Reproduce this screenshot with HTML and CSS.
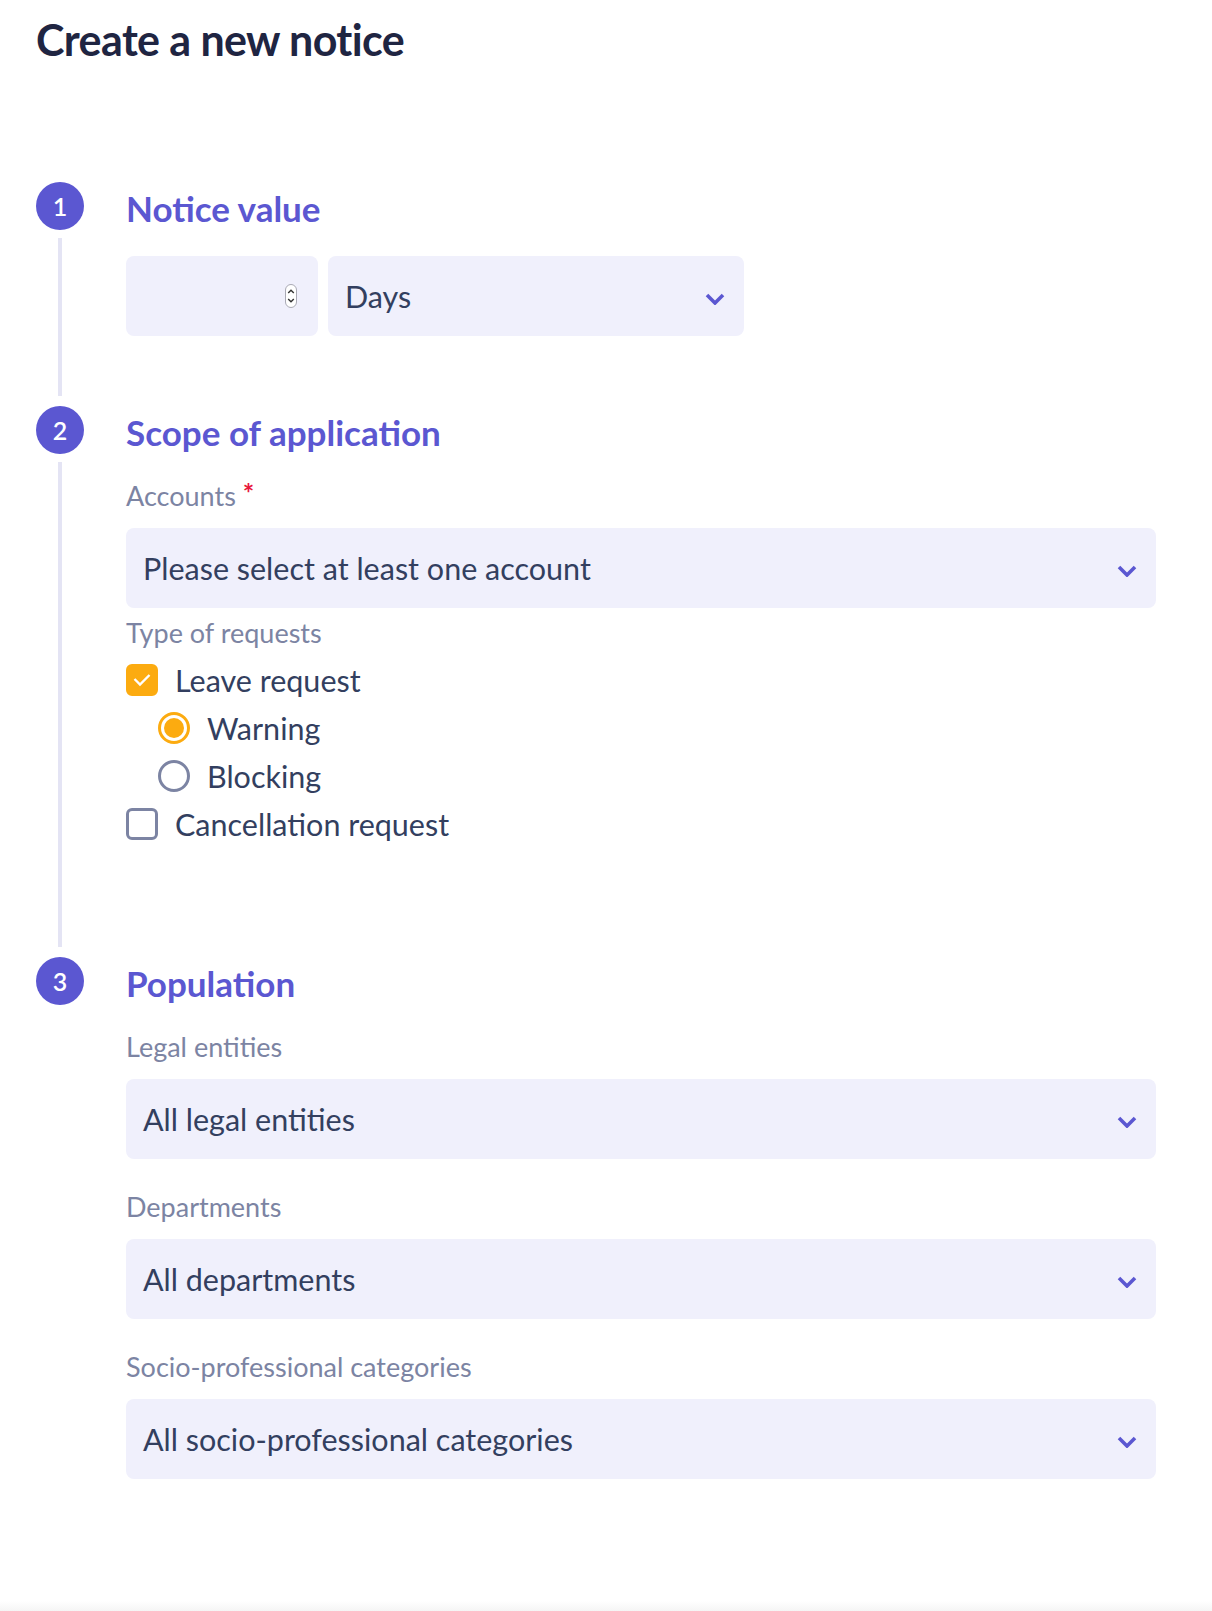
FILE: index.html
```html
<!DOCTYPE html>
<html lang="en">
<head>
<meta charset="utf-8">
<title>Create a new notice</title>
<link rel="stylesheet" href="styles.css">
</head>
<body>
<div class="page">
  <main class="content">
    <h1 class="title">Create a new notice</h1>
    <ol class="steps">
      <li class="step step-1">
        <div class="rail"><span class="num">1</span><span class="line"></span></div>
        <div class="step-body">
          <h2 class="step-title">Notice value</h2>
          <div class="value-row">
            <div class="field field-number">
              <span class="spinner">
                <svg width="12" height="24" viewBox="0 0 12 24"><path d="M3.2 9 L6 6.2 L8.8 9" fill="none" stroke="#333" stroke-width="1.4"/><path d="M3.2 15 L6 17.8 L8.8 15" fill="none" stroke="#333" stroke-width="1.4"/></svg>
              </span>
            </div>
            <div class="field field-select field-days">
              <span class="field-text">Days</span>
              <svg class="chev" width="20" height="12" viewBox="0 0 20 12"><path d="M2 2 L10 10 L18 2" fill="none" stroke="#5b57d1" stroke-width="3.6"/></svg>
            </div>
          </div>
        </div>
      </li>
      <li class="step step-2">
        <div class="rail"><span class="num">2</span><span class="line"></span></div>
        <div class="step-body">
          <h2 class="step-title">Scope of application</h2>
          <div class="group first">
            <label class="label">Accounts <span class="req">*</span></label>
            <div class="field field-select">
              <span class="field-text">Please select at least one account</span>
              <svg class="chev" width="20" height="12" viewBox="0 0 20 12"><path d="M2 2 L10 10 L18 2" fill="none" stroke="#5b57d1" stroke-width="3.6"/></svg>
            </div>
          </div>
          <div class="group tight">
            <label class="label">Type of requests</label>
            <div class="options">
              <div class="option">
                <span class="checkbox checked"><svg width="24" height="18" viewBox="0 0 24 18"><path d="M4.5 8 L10 13.5 L19.5 4" fill="none" stroke="#fff" stroke-width="2.4"/></svg></span>
                <span class="opt-text">Leave request</span>
              </div>
              <div class="option sub">
                <span class="radio checked"><span class="dot"></span></span>
                <span class="opt-text">Warning</span>
              </div>
              <div class="option sub">
                <span class="radio"></span>
                <span class="opt-text">Blocking</span>
              </div>
              <div class="option">
                <span class="checkbox"></span>
                <span class="opt-text">Cancellation request</span>
              </div>
            </div>
          </div>
        </div>
      </li>
      <li class="step step-3">
        <div class="rail"><span class="num">3</span></div>
        <div class="step-body">
          <h2 class="step-title">Population</h2>
          <div class="group first">
            <label class="label">Legal entities</label>
            <div class="field field-select">
              <span class="field-text">All legal entities</span>
              <svg class="chev" width="20" height="12" viewBox="0 0 20 12"><path d="M2 2 L10 10 L18 2" fill="none" stroke="#5b57d1" stroke-width="3.6"/></svg>
            </div>
          </div>
          <div class="group">
            <label class="label">Departments</label>
            <div class="field field-select">
              <span class="field-text">All departments</span>
              <svg class="chev" width="20" height="12" viewBox="0 0 20 12"><path d="M2 2 L10 10 L18 2" fill="none" stroke="#5b57d1" stroke-width="3.6"/></svg>
            </div>
          </div>
          <div class="group">
            <label class="label">Socio-professional categories</label>
            <div class="field field-select">
              <span class="field-text">All socio-professional categories</span>
              <svg class="chev" width="20" height="12" viewBox="0 0 20 12"><path d="M2 2 L10 10 L18 2" fill="none" stroke="#5b57d1" stroke-width="3.6"/></svg>
            </div>
          </div>
        </div>
      </li>
    </ol>
  </main>
  <div class="footer-edge"></div>
</div>
</body>
</html>
```

FILE: styles.css
```css
* { box-sizing: border-box; }
html, body { margin: 0; padding: 0; background: #fff; }
body {
  font-family: "Lato", "Noto Sans", sans-serif;
  color: #333f5f;
}
.page {
  min-height: 100vh;
  display: flex;
  flex-direction: column;
}
.content {
  padding: 10px 0 0 36px;
}
.title {
  margin: 0;
  font-size: 43px;
  line-height: 60px;
  font-weight: 700;
  color: #1f2542;
  letter-spacing: -0.6px;
}
.steps {
  list-style: none;
  margin: 112px 0 0 0;
  padding: 0;
}
.step {
  display: flex;
  gap: 42px;
}
.rail {
  width: 48px;
  display: flex;
  flex-direction: column;
  align-items: center;
  flex: none;
}
.num {
  width: 48px;
  height: 48px;
  border-radius: 50%;
  background: #5b57d1;
  color: #fff;
  font-size: 25px;
  font-weight: 600;
  display: flex;
  align-items: center;
  justify-content: center;
  flex: none;
}
.line {
  flex: 1;
  width: 4px;
  margin: 8px 0 10px;
  background: #e4e4f4;
}
.step-body {
  width: 1030px;
}
.step-1 .step-body { padding-bottom: 70px; }
.step-2 .step-body { padding-bottom: 109px; }
.step-title {
  margin: 0;
  padding-top: 4px;
  font-size: 35px;
  line-height: 44px;
  font-weight: 700;
  color: #5b57d1;
}
.value-row {
  display: flex;
  gap: 10px;
  margin-top: 26px;
}
.field {
  height: 80px;
  background: #f0f0fc;
  border-radius: 8px;
  display: flex;
  align-items: center;
  padding: 0 19px 0 17px;
}
.field-number {
  width: 192px;
  justify-content: flex-end;
  padding-right: 21px;
}
.spinner {
  width: 12px;
  height: 24px;
  border: 1px solid #a9a9b4;
  border-radius: 6px;
  background: #fff;
  display: flex;
}
.spinner svg { display: block; margin: -1px; }
.field-days { width: 416px; }
.field-select { justify-content: space-between; }
.field-text {
  font-size: 30.5px;
  line-height: 40px;
  color: #333f5f;
}
.chev { display: block; margin-top: 6px; }
.group { margin-top: 30px; }
.group.first { margin-top: 24px; }
.group.tight { margin-top: 7px; }
.label {
  display: block;
  font-size: 27px;
  line-height: 36px;
  color: #7c84a3;
  margin-bottom: 14px;
}
.tight .label { margin-bottom: 5px; }
.req {
  color: #e8173b;
  font-size: 27px;
  font-weight: 700;
  vertical-align: top;
  line-height: 30px;
}
.options { display: flex; flex-direction: column; }
.option {
  height: 48px;
  display: flex;
  align-items: center;
  gap: 17px;
}
.option.sub { padding-left: 32px; }
.opt-text {
  font-size: 30.5px;
  line-height: 40px;
  color: #333f5f;
}
.checkbox {
  width: 32px;
  height: 32px;
  border-radius: 6px;
  border: 3px solid #7c84a3;
  display: flex;
  align-items: center;
  justify-content: center;
  flex: none;
}
.checkbox svg { display: block; flex: none; }
.checkbox.checked {
  background: #fcab10;
  border-color: #fcab10;
}
.radio {
  width: 32px;
  height: 32px;
  border-radius: 50%;
  border: 3px solid #7c84a3;
  display: flex;
  align-items: center;
  justify-content: center;
  flex: none;
}
.radio.checked { border-color: #fcab10; }
.dot {
  width: 20px;
  height: 20px;
  border-radius: 50%;
  background: #fcab10;
}
.footer-edge {
  margin-top: auto;
  height: 10px;
  background: linear-gradient(#ffffff, #f5f5f5);
}
```
